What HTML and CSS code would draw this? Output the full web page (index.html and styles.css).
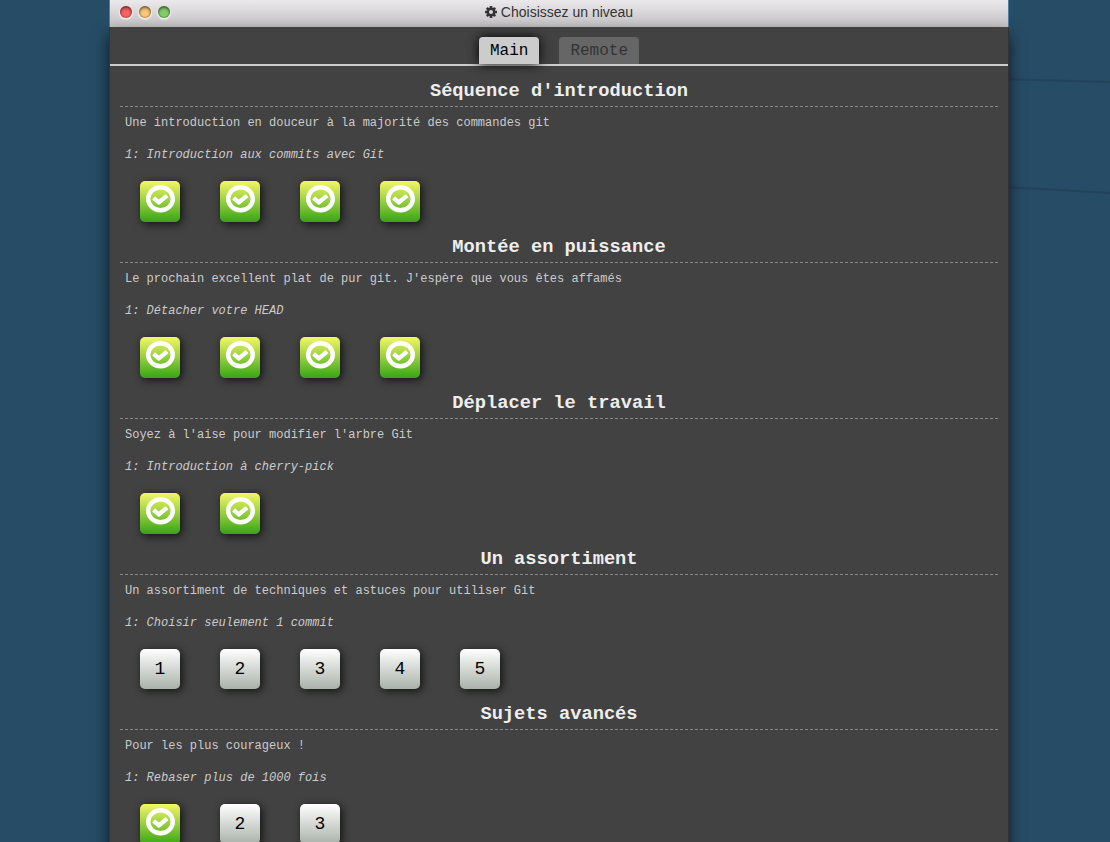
FILE: index.html
```html
<!DOCTYPE html>
<html lang="fr">
<head>
<meta charset="utf-8">
<title>Choisissez un niveau</title>
<link rel="stylesheet" href="styles.css">
</head>
<body>
<svg class="backdrop" viewBox="0 0 110 200" aria-hidden="true"><path d="M0 79 L110 82 M0 187 Q60 190 110 193"/></svg>
<svg class="defs" aria-hidden="true">
  <symbol id="check" viewBox="0 0 29 28">
    <ellipse cx="14.5" cy="13.7" rx="12.3" ry="11.5" fill="none" stroke="#fff" stroke-width="4.4"/>
    <path d="M7.6 12.8 L12.8 17.4 L21 10.6" fill="none" stroke="#fff" stroke-width="4.4" stroke-linejoin="round"/>
  </symbol>
</svg>
<main class="window">
  <header class="titlebar">
    <div class="lights">
      <button class="light red" aria-label="Fermer"></button>
      <button class="light amber" aria-label="Réduire"></button>
      <button class="light green" aria-label="Agrandir"></button>
    </div>
    <h1 class="title">
      <svg class="gear" viewBox="0 0 12 12" aria-hidden="true"><circle cx="6" cy="6" r="3.2" fill="none" stroke="#333" stroke-width="2.4"/><path d="M6 0V2.5M6 9.5V12M0 6H2.5M9.5 6H12M1.8 1.8L3.5 3.5M8.5 8.5L10.2 10.2M10.2 1.8L8.5 3.5M3.5 8.5L1.8 10.2" stroke="#333" stroke-width="2.6"/></svg>
      Choisissez un niveau
    </h1>
  </header>
  <div class="content">
    <nav class="tabs">
      <button class="tab active">Main</button>
      <button class="tab">Remote</button>
    </nav>
    <div class="levels">
      <section class="series">
        <h3 class="heading">Séquence d'introduction</h3>
        <p class="about">Une introduction en douceur à la majorité des commandes git</p>
        <p class="name">1: Introduction aux commits avec Git</p>
        <div class="row">
          <button class="level solved" aria-label="Niveau 1"><svg><use href="#check"/></svg></button>
          <button class="level solved" aria-label="Niveau 2"><svg><use href="#check"/></svg></button>
          <button class="level solved" aria-label="Niveau 3"><svg><use href="#check"/></svg></button>
          <button class="level solved" aria-label="Niveau 4"><svg><use href="#check"/></svg></button>
        </div>
      </section>
      <section class="series">
        <h3 class="heading">Montée en puissance</h3>
        <p class="about">Le prochain excellent plat de pur git. J'espère que vous êtes affamés</p>
        <p class="name">1: Détacher votre HEAD</p>
        <div class="row">
          <button class="level solved" aria-label="Niveau 1"><svg><use href="#check"/></svg></button>
          <button class="level solved" aria-label="Niveau 2"><svg><use href="#check"/></svg></button>
          <button class="level solved" aria-label="Niveau 3"><svg><use href="#check"/></svg></button>
          <button class="level solved" aria-label="Niveau 4"><svg><use href="#check"/></svg></button>
        </div>
      </section>
      <section class="series">
        <h3 class="heading">Déplacer le travail</h3>
        <p class="about">Soyez à l'aise pour modifier l'arbre Git</p>
        <p class="name">1: Introduction à cherry-pick</p>
        <div class="row">
          <button class="level solved" aria-label="Niveau 1"><svg><use href="#check"/></svg></button>
          <button class="level solved" aria-label="Niveau 2"><svg><use href="#check"/></svg></button>
        </div>
      </section>
      <section class="series">
        <h3 class="heading">Un assortiment</h3>
        <p class="about">Un assortiment de techniques et astuces pour utiliser Git</p>
        <p class="name">1: Choisir seulement 1 commit</p>
        <div class="row">
          <button class="level">1</button>
          <button class="level">2</button>
          <button class="level">3</button>
          <button class="level">4</button>
          <button class="level">5</button>
        </div>
      </section>
      <section class="series">
        <h3 class="heading">Sujets avancés</h3>
        <p class="about">Pour les plus courageux !</p>
        <p class="name">1: Rebaser plus de 1000 fois</p>
        <div class="row">
          <button class="level solved" aria-label="Niveau 1"><svg><use href="#check"/></svg></button>
          <button class="level">2</button>
          <button class="level">3</button>
        </div>
      </section>
    </div>
  </div>
</main>
</body>
</html>
```
FILE: styles.css
```css
* { box-sizing: border-box; }

html, body { height: 100%; }

body {
  margin: 0;
  overflow: hidden;
  background: #274c65;
  font-family: "Courier New", Courier, "Liberation Mono", monospace;
}

button { font: inherit; margin: 0; border: 0; }

.backdrop {
  position: absolute;
  z-index: -1;
  top: 0;
  right: 0;
  width: 110px;
  height: 200px;
  fill: none;
  stroke: #23435a;
  stroke-width: 2;
}

.defs { position: absolute; width: 0; height: 0; }

.window { margin: 0 101px 0 109px; }

.titlebar {
  display: grid;
  grid-template-columns: 1fr auto 1fr;
  align-items: center;
  height: 27px;
  padding: 0 10px 3px;
  border: solid #4f7ea3;
  border-width: 0 1px;
  background: linear-gradient(#ebe9eb, #c2c1c2);
}

.lights { display: flex; gap: 7px; }

.light {
  width: 12px;
  height: 12px;
  padding: 0;
  border-radius: 50%;
  box-shadow: inset 0 2px 3px #0007, inset 0 0 1px 1px #0003, 0 1px 1px 1px #fff9;
}

.red { background: #fa6262; }
.amber { background: #fac677; }
.green { background: #84cc6c; }

.title {
  display: flex;
  align-items: center;
  gap: 4px;
  margin: 0;
  font: 14px/20px "Liberation Sans", Arial, sans-serif;
  color: #333;
}

.gear { width: 12px; height: 12px; }

.content {
  border: solid #333;
  border-width: 0 1px;
  background: #424242;
  box-shadow: 0 8px 14px #000a;
}

.tabs {
  display: flex;
  justify-content: center;
  gap: 20px;
  padding-top: 10px;
  border-bottom: 2px solid #ccc;
}

.tab {
  height: 27px;
  padding: 1px 11px 0;
  border-radius: 4px 4px 0 0;
  background: #666;
  color: #333;
  font-size: 16px;
  line-height: 26px;
}

.active {
  background: #ccc;
  color: #000;
  box-shadow: 0 0 12px #000;
}

.levels {
  display: flex;
  flex-direction: column;
  gap: 12px;
  padding: 12px 10px;
}

.heading {
  margin: 0;
  padding: 1px 0 3px;
  border-bottom: 1px dashed #888;
  color: #eee;
  line-height: 24px;
  text-align: center;
}

.about, .name {
  margin: 0;
  padding: 0 5px;
  color: #ccc;
  font-size: 12px;
  line-height: 20px;
}

.about { margin: 6px 0 12px; }
.name { font-style: italic; }

.row {
  display: flex;
  align-items: flex-start;
  gap: 40px;
  padding: 16px 20px 0;
}

.level {
  width: 40px;
  height: 40px;
  padding: 0;
  border-radius: 5px;
  background: linear-gradient(#fff, #a9b1a9);
  box-shadow: 2px 2px 8px #000b;
  color: #000;
  font-size: 18px;
}

.solved {
  display: flex;
  justify-content: center;
  height: 41px;
  padding-top: 4px;
  background: linear-gradient(#f4f766, #36a516);
}

.solved svg { width: 29px; height: 28px; }
```
